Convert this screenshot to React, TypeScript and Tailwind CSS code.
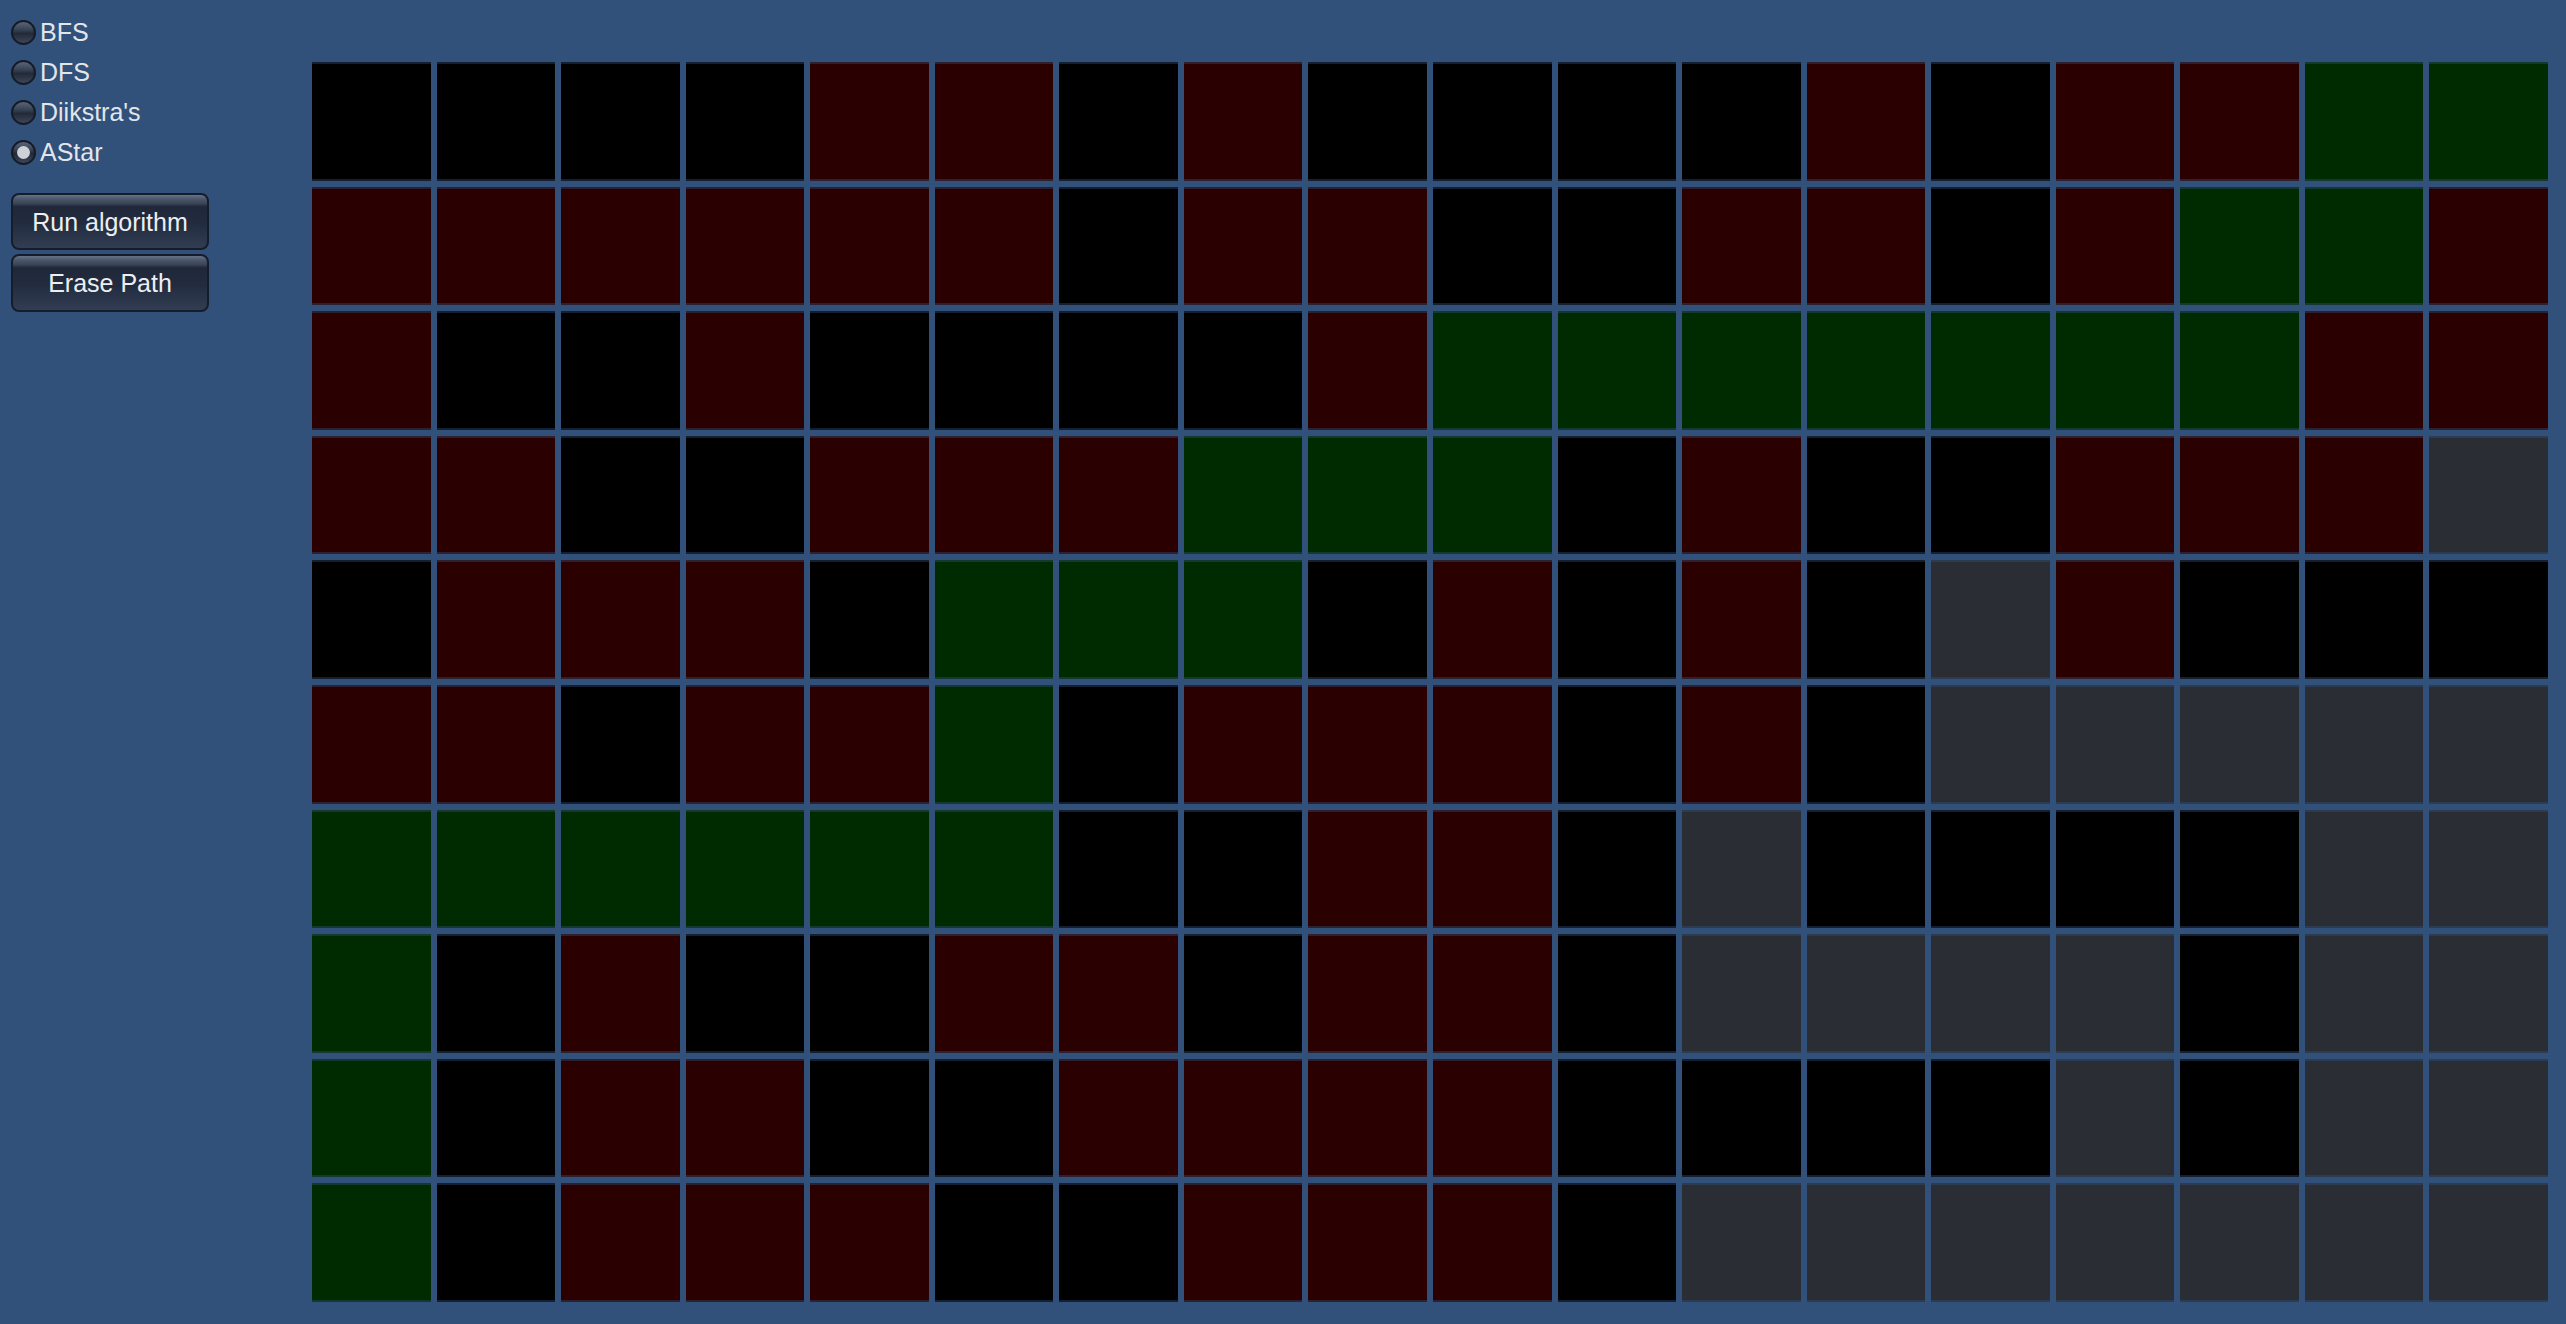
import React from 'react';

// K = unvisited, R = visited, G = path, Y = wall
const rows: string[] = [
  'KKKKRRKRKKKKRKRRGG',
  'RRRRRRKRRKKRRKRGGR',
  'RKKRKKKKRGGGGGGGRR',
  'RRKKRRRGGGKRKKRRRY',
  'KRRRKGGGKRKRKYRKKK',
  'RRKRRGKRRRKRKYYYYY',
  'GGGGGGKKRRKYKKKKYY',
  'GKRKKRRKRRKYYYYKYY',
  'GKRRKKRRRRKKKKYKYY',
  'GKRRRKKRRRKYYYYYYY',
];

const cellColor: Record<string, string> = {
  K: 'bg-[#000000]',
  R: 'bg-[#2b0000]',
  G: 'bg-[#002a00]',
  Y: 'bg-[#2a2d34]',
};

const algorithms = ['BFS', 'DFS', "Diikstra's", 'AStar'];

const Radio: React.FC<{ label: string; checked?: boolean }> = ({ label, checked }) => (
  <div className="flex items-center h-[40px]">
    <div className="relative w-[25px] h-[25px] rounded-full border-2 border-[#151b26] bg-[linear-gradient(to_bottom,#5a6577_0%,#3a4457_35%,#222a38_55%,#3b4659_100%)] flex items-center justify-center">
      {checked && <div className="w-[13px] h-[13px] rounded-full bg-[#cdd1d8]" />}
    </div>
    <span className="ml-[4px] text-[25px] leading-[40px] text-[#e2e5ea]">{label}</span>
  </div>
);

const Button: React.FC<{ label: string; h: string }> = ({ label, h }) => (
  <button
    className={`w-[198px] ${h} rounded-[8px] border-2 border-[#161d2a] bg-[linear-gradient(to_bottom,#66728a_0%,#4a5568_8%,#3a4558_16%,#1f2739_22%,#232c3f_55%,#323d53_100%)] text-[25px] text-[#eceef2] flex items-center justify-center pt-[2px]`}
  >
    {label}
  </button>
);

export default function App() {
  return (
    <div
      className="w-[2566px] h-[1324px] bg-[#31507a] flex overflow-hidden"
      style={{ fontFamily: '"Liberation Sans", Arial, sans-serif' }}
    >
      <div className="w-[312px] shrink-0 pl-[11px] pt-[12px]">
        {algorithms.map((a) => (
          <Radio key={a} label={a} checked={a === 'AStar'} />
        ))}
        <div className="mt-[21px] flex flex-col gap-[4px]">
          <Button label="Run algorithm" h="h-[57px]" />
          <Button label="Erase Path" h="h-[58px]" />
        </div>
      </div>
      <div className="pt-[62px]">
        <div className="w-[2236px] h-[1240px] grid grid-cols-18 grid-rows-10 gap-[6px]">
          {rows.flatMap((row, r) =>
            row.split('').map((c, i) => (
              <div
                key={`${r}-${i}`}
                className={`${cellColor[c]} border-y-2 border-[#31507a]/40`}
              />
            ))
          )}
        </div>
      </div>
    </div>
  );
}
